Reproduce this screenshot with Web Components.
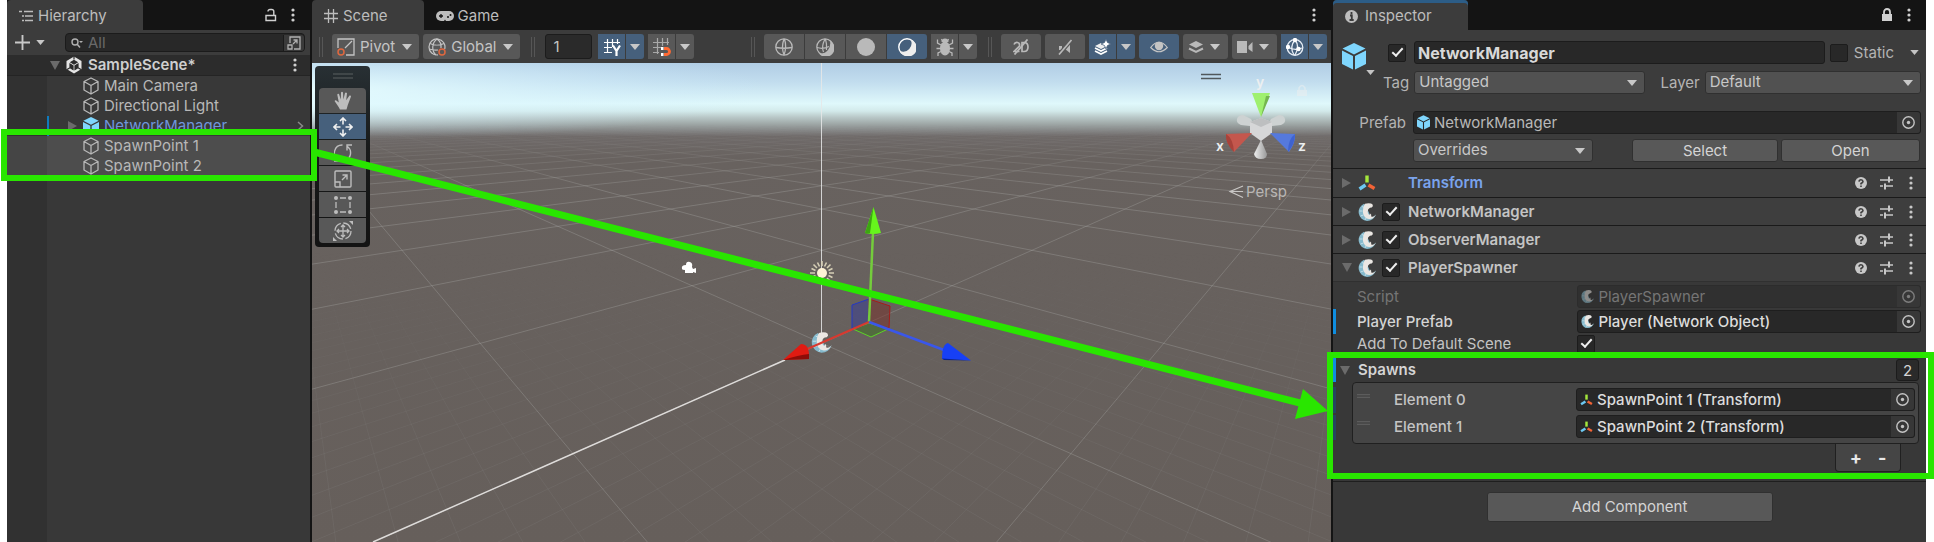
<!DOCTYPE html>
<html lang="en">
<head>
<meta charset="utf-8">
<title>SampleScene - Editor</title>
<style>
  html, body { margin: 0; height: 100%; background: #fff; }
  body { font: 15px/20px Inter, "Liberation Sans", sans-serif; color: #c4c4c4; overflow: hidden; }
</style>
</head>
<body>
<editor-window></editor-window>

<script>
/* ---------- icon library: [viewBox width, viewBox height, markup] ---------- */
const ICONS = {
  list: [14, 12, '<g fill="none" stroke="currentColor"><path d="M0 1.5h3M5 1.5h9M3 6h2M6 6h8M3 10.5h2M6 10.5h8" stroke-width="1.4"/></g>'],
  unlock: [12, 14, '<path d="M1 7.5h9.5v5H1zM8.8 7.500V3.500a2 2 0 0 0-2-2H5a2 2 0 0 0-2 2" fill="none" stroke="currentColor" stroke-width="1.4"/>'],
  lock: [12, 14, '<path d="M1 6h10v7H1z" fill="currentColor"/><path d="M3 6V4a3 3 0 0 1 6 0v2" fill="none" stroke="currentColor" stroke-width="1.8"/>'],
  dots: [4, 14, '<g fill="currentColor"><circle cx="2" cy="2" r="1.600"/><circle cx="2" cy="7" r="1.600"/><circle cx="2" cy="12" r="1.600"/></g>'],
  plus: [16, 16, '<path d="M8 0v16M0 8h16" stroke="currentColor" stroke-width="2"/>'],
  down: [10, 6, '<path d="M0 0h10L5 6z" fill="currentColor"/>'],
  right: [10, 10, '<path d="M0 0L9 5L0 10z" fill="currentColor"/>'],
  foldopen: [10, 9, '<path d="M0 0h10L5 9z" fill="currentColor"/>'],
  search: [12, 10, '<circle cx="4" cy="4" r="3" fill="none" stroke="currentColor" stroke-width="1.400"/><path d="M6 6l3 3.500" stroke="currentColor" stroke-width="1.500"/><path d="M8 3h4L10 5z" fill="currentColor"/>'],
  expand: [14, 14, '<g fill="none" stroke="currentColor" stroke-width="1.300"><path d="M3 7V1h10v12H7M1 9h4v4H1zM6 8l4-4M6.500 4H10v3.500"/></g>'],
  unity: [16, 18, '<path d="M8 .5L15.500 5v8L8 17.500L.5 13V5z" fill="#e4e4e4"/><path d="M8 4.500l3 1.700L8 8 5 6.200zM4 8l3 1.800v3.600L4 11.600zM12 8L9 9.800v3.600l3-1.800zM8 0v3.500M1 13.500l3-1.800M15 13.500l-3-1.800" fill="#2b2b2b" stroke="#2b2b2b" stroke-width="1.200"/>'],
  cube: [16, 18, '<path d="M8 1L15 4.500v8.500L8 17L1 13V4.500zM1 4.500L8 8.500l7-4M8 8.500V17" fill="none" stroke="currentColor" stroke-width="1.300" stroke-linejoin="round"/>'],
  prefab: [24, 27, '<g fill="#7fd6fd"><path d="M12 0L23.500 5.500L12 11.500L.5 5.500z"/><path d="M0 7.500l11 5.500v13.500L0 21z"/><path d="M24 7.500L13 13v13.500L24 21z"/></g>'],
  chevron: [7, 10, '<path d="M1 1l4.500 4L1 9" fill="none" stroke="currentColor" stroke-width="1.500"/>'],
  grid: [14, 14, '<path d="M4.500 0v14M9.500 0v14M0 4.500h14M0 9.500h14" stroke="currentColor" stroke-width="1.300"/>'],
  pad: [18, 10, '<rect width="18" height="10" rx="5" fill="currentColor"/><path d="M5 3v4M3 5h4" stroke="#141414" stroke-width="1.300"/><circle cx="12" cy="6" r="1" fill="#141414"/><circle cx="14.500" cy="4" r="1" fill="#141414"/><path d="M8 10l1-1.500L10 10z" fill="#141414"/>'],
  pivot: [18, 18, '<g fill="none"><path d="M1 10V1h16v16H9" stroke="currentColor" stroke-width="1.300"/><path d="M8 10l7-7" stroke="currentColor" stroke-width="1.300"/><circle cx="4" cy="14" r="3" stroke="#e0683f" stroke-width="1.500"/></g>'],
  global: [18, 18, '<g fill="none" stroke="currentColor" stroke-width="1.200"><path d="M10 16.900A8 8 0 1 1 16.700 11"/><path d="M9 1C3.500 5 3.500 13 8 17M9 1c3.500 2.500 4.500 6 4 9M2 5.500c4 2 10 2 14 0M1 11c3 1 6 1.300 9 1"/><circle cx="14" cy="14" r="3" stroke="#e0683f" stroke-width="1.500"/></g>'],
  gridy: [18, 18, '<path d="M4.500 1v14M9.500 1v8M14.500 1v5M1 4.500h16M1 9.500h8M1 14.500h8" stroke="#fff" stroke-width="1.200"/><path d="M10 7.500l3.500 5.500L17 7.500M13.500 12.500V18" fill="none" stroke="#fff" stroke-width="2.200"/>'],
  snap: [18, 18, '<path d="M4.500 0v16M9.500 0v8M14.500 0v7M0 4.500h16M0 9.500h8M0 14.500h6" stroke="#a8a8a8" stroke-width="1.200"/><path d="M11 10.500h2.500a3 3 0 0 1 0 6H11" fill="none" stroke="#ff6a33" stroke-width="2.800"/><path d="M8 9h2.500v3H8zM8 15h2.500v3H8z" fill="#fff"/>'],
  wire: [18, 18, '<g fill="none" stroke="currentColor" stroke-width="1.300"><circle cx="9" cy="9" r="8.200"/><path d="M9 1Q6 9 9 17M9.500 1Q12 9 9 17M1 9.500q8 1.500 16 0"/></g>'],
  shadedwire: [18, 18, '<g fill="none" stroke="currentColor" stroke-width="1.200"><circle cx="9" cy="9" r="8.200"/><path d="M9 1Q5 9 7.500 14M9.500 1q1.500 5 1 11M1 9.500q6 2 12-1"/></g><path d="M14 2.500A8.700 8.700 0 1 1 3 15.500Q9 16 12 12T14 2.500z" fill="currentColor"/>'],
  solid: [18, 18, '<circle cx="9" cy="9" r="9" fill="currentColor"/>'],
  shaded: [18, 18, '<circle cx="9" cy="9" r="8.200" fill="none" stroke="#fff" stroke-width="1.400"/><path d="M12.500 1.500A8.700 8.700 0 1 1 2 13A8.300 8.300 0 0 0 12.500 1.500z" fill="#eee"/>'],
  bug: [18, 18, '<ellipse cx="9" cy="10.500" rx="5" ry="7" fill="currentColor"/><path d="M5.500 4a3.500 3.500 0 0 1 7 0z" fill="currentColor"/><path d="M5 7L1.500 5V1.500M13 7l3.500-2V1.500M5 10.500H.5M13 10.500h4.500M5 13.500l-3 1.500v3M13 13.500l3 1.500v3M6.500 3L5.500 1M11.500 3l1-2" fill="none" stroke="currentColor" stroke-width="1.300"/>'],
  twod: [16, 16, '<path d="M1 5.500Q2 3 4.500 3.500T6.500 7L1 12.500h5.500M9 3.500h2q4 0 4 4.500t-4 4.500H9z" fill="none" stroke="currentColor" stroke-width="1.700"/><path d="M1.500 15.500L14.500.500" stroke="currentColor" stroke-width="1.800"/>'],
  mute: [16, 16, '<path d="M2 7h3v4H2zM13 4v10L8 10z" fill="currentColor"/><path d="M2 15.500L14.500 1" stroke="#585858" stroke-width="4"/><path d="M2 15.500L14.500 1" stroke="currentColor" stroke-width="1.700"/>'],
  fx: [17, 16, '<g fill="none" stroke="#fff" stroke-width="1.700"><path d="M1 9l6 3 6-3M1 12l6 3 6-3"/></g><path d="M7 4L1 7l6 3 6-3z" fill="#eee"/><path d="M12 0l1.500 3.500L17 5l-3.500 1.500L12 10l-1.500-3.500L7 5l3.500-1.500z" fill="#fff" stroke="#46607c" stroke-width=".8"/>'],
  eye: [18, 14, '<path d="M.7 7.500Q9-3 17.300 7.500Q9 16 .7 7.500z" fill="none" stroke="#c4c4c4" stroke-width="1.200"/><circle cx="9" cy="6" r="4.200" fill="#c4c4c4"/>'],
  layers: [16, 14, '<path d="M8 1L15 4.500L8 8L1 4.500z" fill="currentColor"/><path d="M1 8.500L8 12l7-3.500" fill="none" stroke="currentColor" stroke-width="2"/>'],
  camera: [16, 12, '<path d="M0 0h10v12H0zM11.500 5L15.500 1v10L11.500 8z" fill="currentColor"/>'],
  gizmo: [18, 18, '<g fill="none" stroke="#e8eef5" stroke-width="1.300"><circle cx="9" cy="9.500" r="7.800"/><path d="M9 2Q14 8 9 17M9 2Q3 9 8 17M2 9q6 4 14 1"/></g><g fill="#fff"><circle cx="9" cy="2" r="2.200"/><circle cx="2" cy="9" r="2.200"/><circle cx="12.500" cy="11" r="2.200"/></g>'],
  hand: [18, 19, '<path d="M6 18.500C4.500 15 2.500 13 .7 10.200Q.5 9 2 9.200L4.800 11.500L3.300 3.800Q3.500 2.300 5 3L6.800 8.500L7 1.500Q8 .2 9 1.500L9.400 8.500L11 2Q12 .8 13 2.200L12.200 9.200L15.500 4.500Q17 4 17 5.500L13.800 14L12.500 18.500z" fill="currentColor"/>'],
  move: [20, 20, '<g fill="none" stroke="#f0f0f0" stroke-width="1.600"><path d="M10 7.500V1M10 12.500V19M7.500 10H1M12.500 10H19M7 4l3-3 3 3M7 16l3 3 3-3M4 7l-3 3 3 3M16 7l3 3-3 3"/></g>'],
  rotate: [18, 18, '<g fill="none" stroke="currentColor" stroke-width="1.400"><path d="M8.500 1A8 8 0 0 0 4.500 16M0 17h5.500V12M13 15.500A8 8 0 0 0 13.500 2.500M18 1h-5v5.500"/></g>'],
  scale: [18, 18, '<g fill="none" stroke="currentColor" stroke-width="1.400"><rect x="1" y="1" width="16" height="16" rx="1"/><path d="M1 12h5v5M8 10l5-5M8.500 5H13v4.500"/></g>'],
  rect: [18, 18, '<g fill="currentColor"><circle cx="2" cy="2" r="2"/><circle cx="16" cy="2" r="2"/><circle cx="2" cy="16" r="2"/><circle cx="16" cy="16" r="2"/></g><path d="M6 2h6M6 16h6M2 6v6M16 6v6" stroke="currentColor" stroke-width="1.300"/>'],
  multi: [20, 20, '<g fill="none" stroke="currentColor" stroke-width="1.300"><circle cx="10" cy="10" r="8" stroke-dasharray="10 2.600"/><path d="M10 4v12M4 10h12M8 6l2-2 2 2M8 14l2 2 2-2M6 8l-2 2 2 2M14 8l2 2-2 2"/></g><path d="M20 0v4L16 0zM0 20v-4l4 4z" fill="currentColor"/>'],
  info: [13, 13, '<circle cx="6.500" cy="6.500" r="6.500" fill="currentColor"/><path d="M6.500 2v2.200M5 5.500h1.800V10M4.500 10h4.200" fill="none" stroke="#3c3c3c" stroke-width="1.800"/>'],
  axes: [18, 16, '<g fill="none" stroke-width="3.400"><path d="M9 .5v7" stroke="#a5e83c"/><path d="M7.500 10L1.500 14" stroke="#6cc8f2"/><path d="M10.500 10l6 3.500" stroke="#f26336"/></g>'],
  fish: [18, 18, '<path d="M6 .8A9 9 0 0 0 9 18Q15.500 18 18 11.500Q15.500 14.800 13 14.300L8 3z" fill="#86bacd"/><path d="M7 .8Q10-.3 13 .5Q15.200 1.300 14.800 3.200Q14 4.800 12 4.800Q9.500 6 9.700 9Q10 11.500 11.500 12L13 10.500L13.300 13.500Q15.500 14.500 18 11.500Q15 16.500 11 16Q6 15.500 5 10Q4.500 4 7 .8z" fill="#ebe7e3"/><path d="M4 3.500l2 1M1.500 8h3M2.500 13l3-1M7 17l1-2" stroke="#cfe6ee" stroke-width=".8"/>'],
  help: [12, 12, '<circle cx="6" cy="6" r="6" fill="currentColor"/><path d="M4 4.600Q4.200 2.700 6 2.700T8 4.500Q8 5.500 6 6.500v1" fill="none" stroke="#3e3e3e" stroke-width="1.600"/><path d="M5.200 8.500h1.600V10H5.200z" fill="#3e3e3e"/>'],
  preset: [13, 14, '<g stroke="currentColor" stroke-width="1.500"><path d="M0 4h8M10 4h3M0 10h3M6 10h7"/><path d="M9 .5v6M5 7.500v6" stroke-width="2"/></g>'],
  target: [13, 13, '<circle cx="6.500" cy="6.500" r="5.700" fill="none" stroke="currentColor" stroke-width="1.400"/><circle cx="6.500" cy="6.500" r="1.700" fill="currentColor"/>'],
  handle: [20, 6, '<path d="M0 1h20M0 5h20" stroke="currentColor" stroke-width="1.200"/>'],
};

const define = (name, html) => customElements.define(name, class extends HTMLElement {
  connectedCallback() {
    if (this.shadowRoot) return;
    const root = this.attachShadow({ mode: 'open' });
    const t = document.createElement('template');
    t.innerHTML = typeof html === 'function' ? html(this) : html;
    root.append(t.content.cloneNode(true));
  }
});

/* <u-icon name size>: width in px, height from the icon's own proportion */
define('u-icon', el => {
  const [w, h, body] = ICONS[el.getAttribute('name')];
  const width = Number(el.getAttribute('size')) || w;
  return `<style>:host{display:inline-flex;flex:none}svg{display:block}</style>
    <svg width="${width}" height="${Math.round(width * h / w)}" viewBox="0 0 ${w} ${h}" aria-hidden="true">${body}</svg>`;
});

define('u-tab', el => `<style>
  :host{display:block}
  button{all:unset;box-sizing:border-box;display:flex;align-items:center;gap:4px;height:30px;padding:2px 36px 0 12px;color:#bdbdbd}
  :host([active]) button{background:#3c3c3c;border-radius:4px 4px 0 0;gap:5px}
  :host([focused]) button{box-shadow:inset 0 3px #2c5d87;gap:7px}
</style><button role="tab"><u-icon name="${el.getAttribute('icon')}"></u-icon><slot></slot></button>`);

define('u-tabbar', `<style>
  :host{display:flex;height:30px;background:#141414}
  .end{margin-left:auto;display:flex;align-items:center;gap:14px;padding-right:15px;color:#d0d0d0}
</style><slot></slot><div class="end"><slot name="end"></slot></div>`);

define('icon-button', el => `<style>
  :host{display:inline-flex;flex:none}
  button{all:unset;display:flex;align-items:center}
</style><button aria-label="${el.getAttribute('label')}"><u-icon name="${el.getAttribute('icon')}"${el.hasAttribute('size') ? ` size="${el.getAttribute('size')}"` : ''}></u-icon></button>`);

/* ---------- hierarchy ---------- */
define('tree-row', el => `<style>
  :host{display:grid;grid-template-columns:40px minmax(0,1fr);height:20px}
  .gutter{background:#313131}
  .row{display:flex;align-items:center;gap:5px;padding-left:21px;padding-right:6px;color:#b8b8b8}
  .fold{width:10px;display:flex;color:#6b6b6b}
  .name{flex:1}
  :host([selected]) .row{background:#4d4d4d}
  :host([selected]) .gutter{background:#454545}
  :host([prefab]) .row{color:#6f95dc;box-shadow:inset 2px 0 #0f7bbd}
  .more{color:#8a8a8a;display:flex}
</style><div class="gutter"></div><div class="row">
  <span class="fold">${el.hasAttribute('prefab') ? '<u-icon name="right"></u-icon>' : ''}</span>
  <u-icon name="${el.hasAttribute('prefab') ? 'prefab' : 'cube'}" size="16"></u-icon>
  <span class="name"><slot></slot></span>
  ${el.hasAttribute('prefab') ? '<span class="more"><u-icon name="chevron"></u-icon></span>' : ''}</div>`);

define('hierarchy-panel', `<style>
  :host{display:flex;flex-direction:column;background:#383838;min-width:0}
  .tools{display:flex;align-items:center;height:25px;background:#3c3c3c;padding:0 5px 0 8px;gap:6px;color:#c8c8c8}
  .tools .search{margin-left:14px;flex:1;min-width:0;display:flex;align-items:center;height:19px;box-sizing:border-box;background:#282828;border:1px solid #1b1b1b;border-radius:4px;color:#b0b0b0;padding-left:5px;gap:5px}
  input{all:unset;flex:1;min-width:0;font:inherit;line-height:17px}
  input::placeholder{color:#6a6a6a}
  .search icon-button{border-left:1px solid #1b1b1b;background:#3a3a3a;padding:1px 3px;border-radius:0 3px 3px 0}
  .scene{display:flex;align-items:center;height:20px;background:#2c2c2c;border-bottom:1px solid #242424;padding:0 13px 0 43px;gap:6px;font-weight:600;color:#cfcfcf}
  .scene span{flex:1}
  .scene .fold{color:#6b6b6b}
  .fill{flex:1;display:grid;grid-template-columns:40px 1fr}
  .fill i{background:#313131}
</style>
<u-tabbar><u-tab icon="list" active>Hierarchy</u-tab>
  <icon-button slot="end" icon="unlock" label="Lock"></icon-button><icon-button slot="end" icon="dots" label="Menu"></icon-button></u-tabbar>
<div class="tools"><icon-button icon="plus" size="15" label="Create"></icon-button><u-icon name="down" size="9"></u-icon>
  <div class="search"><u-icon name="search"></u-icon><input type="text" placeholder="All" aria-label="Search"><icon-button icon="expand" label="Open search"></icon-button></div></div>
<div class="scene"><u-icon class="fold" name="foldopen"></u-icon><u-icon name="unity"></u-icon><span>SampleScene*</span><icon-button icon="dots" size="4" label="Scene menu"></icon-button></div>
<tree-row>Main Camera</tree-row><tree-row>Directional Light</tree-row><tree-row prefab>NetworkManager</tree-row>
<tree-row selected>SpawnPoint 1</tree-row><tree-row selected>SpawnPoint 2</tree-row>
<div class="fill"><i></i></div>`);

/* ---------- scene ---------- */
/* <tool-button icon wide on menu>: icon button, "menu" adds a split arrow, "drop" an arrow inside */
define('tool-button', el => `<style>
  :host{display:flex;flex:none;gap:1px;height:25px;color:#b9b9b9}
  button{all:unset;box-sizing:border-box;display:flex;align-items:center;justify-content:center;gap:6px;background:#585858;height:25px;min-width:27px}
  button:first-child{border-radius:3px 0 0 3px} button:last-child{border-radius:0 3px 3px 0}
  button:only-of-type{border-radius:var(--r,3px)}
  :host([wide]) .main{min-width:40px}
  :host([drop]) .main{padding:0 8px 0 5px}
  .arrow{min-width:18px;width:18px}
  .main>u-icon:last-child,.arrow u-icon{color:#c8c8c8}
  :host([on]) button{background:#46607c}
  :host([text]) .main{padding:0 7px 0 5px;gap:5px;color:#c4c4c4}
  :host([text]) .main>u-icon:last-child{margin-left:2px}
</style><button class="main" aria-label="${el.getAttribute('label') || el.textContent}"><u-icon name="${el.getAttribute('icon')}"></u-icon><slot></slot>${el.hasAttribute('drop') ? '<u-icon name="down"></u-icon>' : ''}</button>${el.hasAttribute('menu') ? '<button class="arrow" aria-label="Options"><u-icon name="down"></u-icon></button>' : ''}`);

define('scene-toolbar', `<style>
  :host{display:flex;align-items:center;justify-content:space-between;height:33px;background:#3c3c3c;padding:0 4px 0 7px}
  div{display:flex;align-items:center;gap:4px}
  .grip{width:2px;height:20px;border:solid #565656;border-width:0 1px;margin-right:5px}
  .mid{margin:0 6px 0 7px}
  input{all:unset;box-sizing:border-box;width:47px;height:25px;background:#2a2a2a;border:1px solid #1c1c1c;border-radius:3px;padding:0 7px;margin-right:2px}
  .seg{gap:1px}
  .seg tool-button{--r:0}
  .seg tool-button:first-child{--r:3px 0 0 3px}.seg tool-button:last-child{--r:0 3px 3px 0}
  .late{margin-left:7px}
</style>
<div><span class="grip"></span><tool-button icon="pivot" text drop>Pivot</tool-button><tool-button icon="global" text drop>Global</tool-button>
 <span class="grip mid"></span><input type="text" value="1" aria-label="Grid size"><tool-button icon="gridy" on menu label="Grid"></tool-button><tool-button icon="snap" menu label="Snap"></tool-button></div>
<div><span class="grip"></span><div class="seg"><tool-button wide icon="wire" label="Wireframe"></tool-button><tool-button wide icon="shadedwire" label="Shaded wireframe"></tool-button><tool-button wide icon="solid" label="Unlit"></tool-button><tool-button wide on icon="shaded" label="Shaded"></tool-button></div>
 <tool-button icon="bug" menu label="Debug"></tool-button><span class="grip late"></span>
 <tool-button wide icon="twod" label="2D view"></tool-button><tool-button wide icon="mute" label="Audio"></tool-button><tool-button icon="fx" on menu label="Effects"></tool-button><tool-button wide on icon="eye" label="Visibility"></tool-button><tool-button icon="layers" drop label="Layers"></tool-button><tool-button icon="camera" drop label="Camera"></tool-button><tool-button icon="gizmo" on menu label="Gizmos"></tool-button></div>`);

define('tool-palette', `<style>
  :host{display:flex;flex-direction:column;gap:1px;box-sizing:border-box;width:55px;padding:7px 4px 4px;background:linear-gradient(#283034,#181a1a 45%,#131313);border-radius:4px;color:#bdbdbd}
  .grip{align-self:center;color:#5a6060;margin-bottom:8px}
  button{all:unset;display:flex;align-items:center;justify-content:center;height:25px;background:#585858}
  .on{background:#46607c}
  .first{border-radius:4px 4px 0 0}.last{border-radius:0 0 4px 4px}
</style><u-icon class="grip" name="handle"></u-icon>
<button class="first" aria-label="Hand"><u-icon name="hand"></u-icon></button><button class="on" aria-label="Move"><u-icon name="move"></u-icon></button><button aria-label="Rotate"><u-icon name="rotate"></u-icon></button><button aria-label="Scale"><u-icon name="scale"></u-icon></button><button aria-label="Rect"><u-icon name="rect"></u-icon></button><button class="last" aria-label="Transform"><u-icon name="multi"></u-icon></button>`);

/* Ground grid in perspective: (i, j) cell corners, w is the inverse distance below the horizon. */
function groundGrid() {
  const at = (i, j) => {
    const w = 0.004144 + 0.0013 * (i + j);
    return [822 + 0.708 * (i - j) / w, 102 + 1 / w];
  };
  const line = (i, swap) => {
    const near = (0.0011 - 0.004144) / 0.0013 - i, far = 60 - i;
    const p = swap ? [at(near, i), at(far, i)] : [at(i, near), at(i, far)];
    return `M${p[0].map(v => v.toFixed(1))}L${p[1].map(v => v.toFixed(1))}`;
  };
  let major = '', minor = '';
  for (let i = -24; i <= 36; i++) major += line(i) + line(i, true);
  for (let i = -60; i <= 60; i++) if (i % 10) minor += line(i / 10) + line(i / 10, true);
  return `<path d="${minor}" stroke="#8d8e8c" stroke-opacity=".16" mask="url(#near)"/><path d="${major}" stroke="#a6a5a3" stroke-opacity=".36" mask="url(#far)"/>`;
}

define('scene-view', () => `<style>
  :host{display:grid;flex:1;min-height:0;overflow:hidden;position:relative}
  svg{grid-area:1/1;width:100%;height:100%;display:block;min-height:0}
  tool-palette{position:absolute;left:3px;top:3px}
</style>
<svg viewBox="312 63 1019 479" preserveAspectRatio="xMidYMin slice" role="img" aria-label="Scene">
 <defs>
  <linearGradient id="sky" gradientUnits="userSpaceOnUse" x1="0" y1="63" x2="0" y2="542">
   <stop offset="0" stop-color="#b1cde5"/><stop offset=".04" stop-color="#c2ddee"/><stop offset=".085" stop-color="#dff8fb"/><stop offset=".1" stop-color="#d3eaeb"/><stop offset=".113" stop-color="#b9c8c8"/><stop offset=".125" stop-color="#a3adac"/><stop offset=".14" stop-color="#878989"/><stop offset=".153" stop-color="#6f6a69"/><stop offset=".2" stop-color="#68625f"/><stop offset="1" stop-color="#665f5b"/>
  </linearGradient>
  <radialGradient id="glow" gradientUnits="userSpaceOnUse" cx="312" cy="90" r="460" gradientTransform="translate(0 80.100) scale(1 .11)"><stop offset="0" stop-color="#e8feff" stop-opacity=".9"/><stop offset="1" stop-color="#d0f0ff" stop-opacity="0"/></radialGradient>
  <linearGradient id="f1" gradientUnits="userSpaceOnUse" x1="0" y1="125" x2="0" y2="190"><stop offset="0" stop-color="#000"/><stop offset="1" stop-color="#fff"/></linearGradient>
  <linearGradient id="f2" gradientUnits="userSpaceOnUse" x1="0" y1="250" x2="0" y2="480"><stop offset="0" stop-color="#000"/><stop offset="1" stop-color="#fff"/></linearGradient>
  <mask id="far" maskUnits="userSpaceOnUse" x="312" y="63" width="1019" height="479"><path d="M312 63h1019v479H312z" fill="url(#f1)"/></mask>
  <mask id="near" maskUnits="userSpaceOnUse" x="312" y="63" width="1019" height="479"><path d="M312 63h1019v479H312z" fill="url(#f2)"/></mask>
  <linearGradient id="cone"><stop offset="0" stop-color="#eee"/><stop offset="1" stop-color="#999"/></linearGradient>
 </defs>
 <path d="M312 63h1019v479H312z" fill="url(#sky)"/>
 <path d="M312 63h480v80H312z" fill="url(#glow)"/>
 <g fill="none" stroke-width="1">${groundGrid()}</g>
 <path d="M821.500 63V333" stroke="#e6e8e8" stroke-opacity=".85"/>
 <path d="M785 360L373 542" stroke="#dedcda" stroke-width="1.500"/>
 <!-- camera and light gizmos -->
 <path d="M682 269q-1-4 4-4q0-4 4-3q3 1 2 5l1 2 3-1v5l-3-1v1h-8v-3q-3 0-3-1z" fill="#fff"/>
 <g stroke="#d6cfb6" stroke-width="1.600"><path d="M822 261v5M822 279v5M810 273h5M829 273h5M813.500 264.500l3.500 3.500M830.500 264.500l-3.500 3.500M813.500 281.500l3.500-3.500M830.500 281.500l-3.500-3.500M817.500 262.500l2 4M826.500 262.500l-2 4M811.500 268.500l4 2M832.500 268.500l-4 2M811.500 277.500l4-2M832.500 277.500l-4-2"/></g><circle cx="822" cy="273" r="5" fill="#fff3d6"/>
 <g transform="translate(811 332) scale(1.150)">${ICONS.fish[2]}</g>
 <!-- move handles -->
 <path d="M852 305l17-6v24l-17 7z" fill="#3b3f93" fill-opacity=".55" stroke="#2438c4"/>
 <path d="M869 299l21 7-1 22-20-5z" fill="#7a2f2a" fill-opacity=".5" stroke="#a51d1a"/>
 <path d="M869 323l19 6-17 8-18-8z" fill="#44722c" fill-opacity=".6" stroke="#5cd426"/>
 <path d="M869 322L873 232" stroke="#74cc3c" stroke-width="2.500"/><path d="M873.500 207L881 233q-8 2-16 0z" fill="#66f51c"/><path d="M873.500 207l-8.500 26q3 1 5 0z" fill="#3da512"/>
 <path d="M869 322L805 350" stroke="#d8392f" stroke-width="2"/><path d="M783 360L801 344q9 0 8 15z" fill="#e01b12"/><path d="M783 360l26-1v-5q-10 1-26 6z" fill="#8d0d08"/>
 <path d="M869 322L944 350" stroke="#3a57ea" stroke-width="2.500"/><path d="M971 360.500L948 343q-6 1-6 16z" fill="#1740f5"/><path d="M971 360.500l-29-2 2 1.500z" fill="#0a2190"/>
 <!-- orientation gizmo -->
 <path d="M1201 74.500h20M1201 78.500h20" stroke="#50585c" stroke-width="1.500"/>
 <path d="M1237 119q1-4 6-4l8 4 2 4-3 3-9-1q-5-2-4-6zM1285 119q-1-4-6-4l-8 4-2 4 3 3 9-1q5-2 4-6z" fill="#cdd2d2"/>
 <path d="M1261 140l6 14q0 5-6 5t-7-5z" fill="url(#cone)"/>
 <path d="M1261 118l11 4v11l-11 8-11-8v-11z" fill="#d6d7d8"/><path d="M1261 118l11 4-11 5-11-5z" fill="#bdbfc0"/>
 <path d="M1261 117l-9-24h18z" fill="#9ff06f"/><path d="M1261 117l5-21h4z" fill="#74b64f"/>
 <path d="M1252 133l-26 1q-1 8 8 18z" fill="#c4574d"/><path d="M1226 134q7 4 8 18-9-9-8-18z" fill="#a8423a"/>
 <path d="M1270 133l25 1q1 8-6 18z" fill="#5579dd"/><path d="M1295 134q-7 5-7 18 7-8 7-18z" fill="#3f63d0"/>
 <g opacity=".55"><path d="M1297 90h10v6h-10z" fill="#eceff0"/><path d="M1299 90v-2q3-5 6 0v2" fill="none" stroke="#eceff0" stroke-width="1.500"/></g>
 <g font-family="Inter, sans-serif" fill="#eceff0"><g font-size="14" font-weight="600"><text x="1256" y="87">y</text><text x="1216" y="151">x</text><text x="1298" y="151">z</text></g>
 <text x="1246" y="197" font-size="15" fill="#b9b6b4">Persp</text></g>
 <path d="M1243 186l-13 5.500 13 6M1230 191.500h13" fill="none" stroke="#c9c7c5" stroke-width="1.200"/>
</svg>
<tool-palette></tool-palette>`);

define('scene-panel', `<style>
  :host{display:flex;flex-direction:column;min-width:0;background:#383838}
</style>
<u-tabbar><u-tab icon="grid" active>Scene</u-tab><u-tab icon="pad">Game</u-tab><icon-button slot="end" icon="dots" label="Menu"></icon-button></u-tabbar>
<scene-toolbar></scene-toolbar><scene-view></scene-view>`);

/* ---------- inspector ---------- */
define('check-box', el => `<style>
  :host{display:inline-flex;flex:none}
  input{appearance:none;margin:0;width:18px;height:18px;box-sizing:border-box;background:#282828;border:1px solid #1c1c1c;border-radius:2px;display:grid;place-items:center}
  input:checked::before{content:"";width:9px;height:4px;border:solid #eee;border-width:0 0 2px 2px;rotate:-48deg;margin-bottom:4px}
</style><input type="checkbox" aria-label="${el.getAttribute('label')}"${el.hasAttribute('checked') ? ' checked' : ''}>`);

define('drop-down', el => `<style>
  :host{display:grid;align-items:center;min-width:0}
  select{appearance:none;grid-area:1/1;width:100%;height:23px;box-sizing:border-box;margin:0;padding:0 24px 2px 4px;background:#515151;border:1px solid #303030;border-radius:3px;color:#c8c8c8;font:inherit;line-height:20px}
  u-icon{grid-area:1/1;justify-self:end;margin-right:8px;color:#c8c8c8;pointer-events:none}
</style><select aria-label="${el.getAttribute('label')}"><option>${el.getAttribute('value')}</option></select><u-icon name="down"></u-icon>`);

define('object-field', el => `<style>
  :host{display:flex;align-items:center;box-sizing:border-box;height:23px;min-width:0;background:#282828;border:1px solid #1e1e1e;border-radius:3px;padding-left:3px;gap:4px}
  span{flex:1;white-space:nowrap;overflow:hidden}
  button{all:unset;display:flex;align-items:center;justify-content:center;width:23px;height:21px;background:#373737;border-radius:0 3px 3px 0;color:#c4c4c4}
  :host([strong]){color:#dcdcdc;font-weight:500}
  :host([disabled]){background:#303030;border-color:#2c2c2c;color:#757575}
  :host([disabled]) u-icon{opacity:.5}
</style><u-icon name="${el.getAttribute('icon')}" size="13"></u-icon><span><slot></slot></span><button aria-label="Pick object"><u-icon name="target"></u-icon></button>`);

define('push-button', `<style>
  :host{display:block;min-width:0}
  button{all:unset;box-sizing:border-box;width:100%;height:var(--h,23px);background:#585858;border:1px solid #303030;border-radius:3px;text-align:center;color:#d4d4d4}
</style><button><slot></slot></button>`);

define('component-header', el => `<style>
  :host{display:flex;align-items:center;height:27px;border-top:1px solid #1a1a1a;background:#3e3e3e;padding:0 13px 0 9px;gap:6px;font-weight:600}
  :host([link]){height:28px}
  .fold{width:10px;display:flex;color:#6b6b6b}
  .name{flex:1;padding-left:2px}
  :host([link]) .name{color:#7aa3ec}
  .end{display:flex;align-items:center;gap:13px;color:#c8c8c8}
  .end>:last-child{padding-left:3px}
  .none{width:18px}
</style><span class="fold"><u-icon name="${el.hasAttribute('open') ? 'foldopen' : 'right'}"></u-icon></span><u-icon name="${el.getAttribute('icon')}"></u-icon>
${el.hasAttribute('link') ? '<span class="none"></span>' : '<check-box checked label="Enabled"></check-box>'}
<span class="name"><slot></slot></span><span class="end"><icon-button icon="help" label="Help"></icon-button><icon-button icon="preset" label="Presets"></icon-button><icon-button icon="dots" size="4" label="Menu"></icon-button></span>`);

define('property-row', `<style>
  :host{display:grid;grid-template-columns:220fr 343fr;align-items:center;height:25px;padding:0 5px 0 24px}
  :host([dim]){color:#757575}
  :host([strong]){color:#d4d4d4;font-weight:500;box-shadow:inset 3px 0 #0f8ee0}
  :host([short]){height:20px}
</style><span><slot name="label"></slot></span><slot></slot>`);

define('spawn-item', el => `<style>
  :host{display:flex;align-items:center;height:27px;padding:0 3px 0 4px;font-weight:500}
  u-icon{color:#6b6b6b;margin-bottom:8px;margin-right:24px}
  span{flex:182 1 0;min-width:0}
  object-field{flex:334 1 0}
</style><u-icon name="handle" size="13"></u-icon><span>${el.getAttribute('name')}</span><object-field strong icon="axes"><slot></slot></object-field>`);

define('spawn-list', `<style>
  :host{display:block;padding:4px 7px 9px 0}
  .head{display:flex;align-items:center;gap:8px;padding-left:7px;height:24px;font-weight:600;color:#d4d4d4;box-shadow:inset 3px 0 #0f8ee0}
  .head u-icon{color:#6b6b6b}
  .head span{flex:1}
  input{all:unset;box-sizing:border-box;width:23px;height:22px;background:#2a2a2a;border:1px solid #1c1c1c;border-radius:3px;text-align:center;font-weight:400}
  .body{display:grid;grid-template-columns:3px 1fr;column-gap:16px}
  .marks{background:linear-gradient(transparent 5px,#24455e 5px 31px,transparent 31px 33px,#24455e 33px 58px,transparent 58px)}
  .items{background:#454545;border:1px solid #202020;border-radius:4px;padding:3px 0}
  .foot{margin-left:auto;margin-right:18px;width:66px;height:28px;box-sizing:border-box;display:flex;align-items:center;justify-content:center;gap:16px;background:#454545;border:1px solid #202020;border-top:0;border-radius:0 0 4px 4px}
  button{all:unset;font-weight:700;font-size:18px;color:#e8e8e8}
</style>
<div class="head"><u-icon name="foldopen"></u-icon><span>Spawns</span><input type="text" value="2" aria-label="Spawns size"></div>
<div class="body"><div class="marks"></div><div class="items"><spawn-item name="Element 0">SpawnPoint 1 (Transform)</spawn-item><spawn-item name="Element 1">SpawnPoint 2 (Transform)</spawn-item></div></div>
<div class="foot"><button>+</button><button>-</button></div>`);

define('inspector-panel', `<style>
  :host{display:flex;flex-direction:column;min-width:0;background:#383838}
  header{display:grid;grid-template-columns:47px minmax(0,1fr);background:#3c3c3c;padding:11px 5px 6px 0;row-gap:7px}
  .big{grid-row:1/3;padding:2px 0 0 9px;position:relative}
  .big .arr{position:absolute;left:33px;top:29px}
  .row{display:flex;align-items:center;height:23px}
  .name{padding:0 2px 0 8px}
  .name input{all:unset;flex:1;min-width:0;box-sizing:border-box;height:23px;background:#282828;border:1px solid #1c1c1c;border-radius:3px;padding:0 3px;font-weight:700;font-size:16px;color:#d8d8d8;margin:0 5px 0 8px}
  .name .st{margin:0 16px 0 6px}
  .lab{color:#b4b4b4}
  .tag .lab{padding-left:3px;margin-right:5px}
  .tag drop-down{flex:230}
  .tag .lay{padding-left:16px}
  .tag drop-down:last-child{flex:216}
  .full{grid-column:1/3}
  .pf{margin-top:10px}
  .pf .lab{width:73px;text-align:right;margin-right:7px}
  .pf object-field{flex:1;color:#b8b8b8}
  .ov{margin-top:-2px;padding-left:80px}
  .ov drop-down{flex:180}.ov push-button{flex:146}.ov .s{margin:0 3px 0 39px}
  .ov .o{flex:139;margin-right:1px}
  .props{border-top:1px solid #303030;padding-top:2px}
  .add{border-top:1px solid #1e1e1e;padding-top:10px;display:flex;justify-content:center}
  .add push-button{--h:30px;width:286px}
</style>
<u-tabbar><u-tab icon="info" active focused>Inspector</u-tab><icon-button slot="end" icon="lock" label="Lock"></icon-button><icon-button slot="end" icon="dots" label="Menu"></icon-button></u-tabbar>
<header>
 <div class="big"><u-icon name="prefab"></u-icon><u-icon class="arr" name="down" size="9"></u-icon></div>
 <div class="row name"><check-box checked label="Active"></check-box><input type="text" value="NetworkManager" aria-label="Name"><check-box label="Static"></check-box><span class="lab st">Static</span><u-icon name="down" size="9"></u-icon></div>
 <div class="row tag"><span class="lab">Tag</span><drop-down label="Tag" value="Untagged"></drop-down><span class="lab lay">Layer</span><drop-down label="Layer" value="Default"></drop-down></div>
 <div class="row full pf"><span class="lab">Prefab</span><object-field icon="prefab">NetworkManager</object-field></div>
 <div class="row full ov"><drop-down label="Overrides" value="Overrides"></drop-down><push-button class="s">Select</push-button><push-button class="o">Open</push-button></div>
</header>
<component-header link icon="axes">Transform</component-header>
<component-header icon="fish">NetworkManager</component-header>
<component-header icon="fish">ObserverManager</component-header>
<component-header icon="fish" open>PlayerSpawner</component-header>
<div class="props">
 <property-row dim><span slot="label">Script</span><object-field icon="fish" disabled>PlayerSpawner</object-field></property-row>
 <property-row strong><span slot="label">Player Prefab</span><object-field icon="fish" strong>Player (Network Object)</object-field></property-row>
 <property-row short><span slot="label">Add To Default Scene</span><check-box checked label="Add To Default Scene"></check-box></property-row>
 <spawn-list></spawn-list>
</div>
<div class="add"><push-button>Add Component</push-button></div>`);

/* ---------- call-out drawn over the panels ---------- */
define('call-out', `<style>
  :host{position:absolute;inset:0;pointer-events:none}
  svg{width:100%;height:100%;display:block}
</style><svg viewBox="0 0 1934 542" preserveAspectRatio="none" aria-hidden="true">
 <g fill="none" stroke="#29e600" stroke-width="6"><rect x="4" y="132" width="310" height="46"/><rect x="1330" y="355" width="601" height="121"/><path d="M314 152L1304 404" stroke-width="7"/></g>
 <path d="M1328 411L1303 389L1295 419z" fill="#29e600"/></svg>`);

define('editor-window', `<style>
  :host{display:block;position:relative;min-height:100vh}
  main{box-sizing:border-box;min-height:100vh;margin:0 8px 0 7px;display:grid;grid-template-columns:303fr 1019fr 593fr;gap:2px;background:#141414}
</style><main><hierarchy-panel></hierarchy-panel><scene-panel></scene-panel><inspector-panel></inspector-panel></main><call-out></call-out>`);
</script>
</body>
</html>
